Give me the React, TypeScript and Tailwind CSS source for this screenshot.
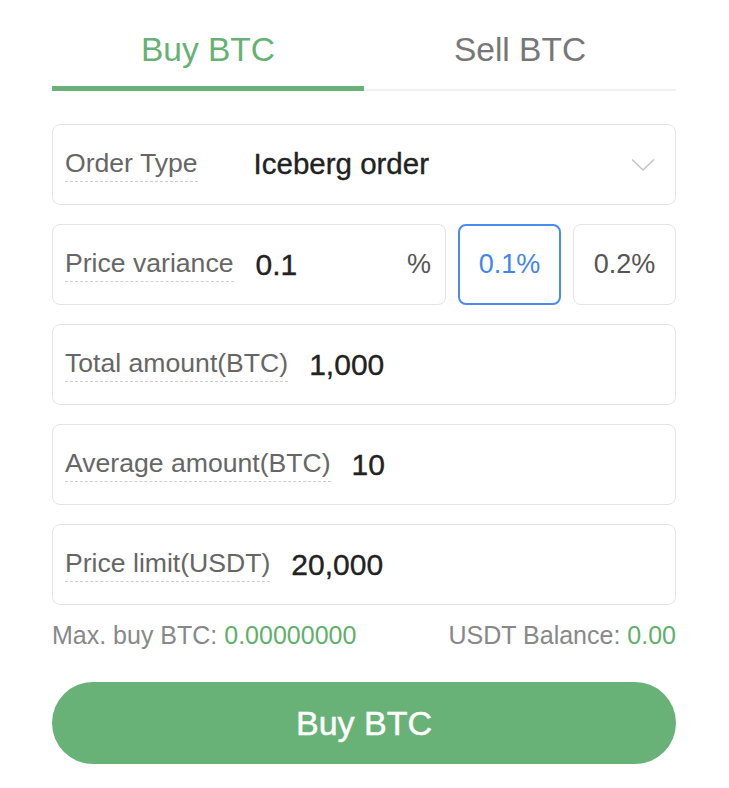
import React, { useState } from 'react';

const font = { fontFamily: '"Liberation Sans", Arial, sans-serif' };

const Label: React.FC<{ children: React.ReactNode }> = ({ children }) => (
    <span className="inline-block text-[26.6px] leading-[30px] text-[#666] border-b border-dashed border-[#cfcfcf] pb-[3px] whitespace-nowrap">
        {children}
    </span>
);

const Field: React.FC<{ label: string; value: string }> = ({ label, value }) => (
    <div className="h-[81px] flex items-center px-3 border border-[#e4e4e4] rounded-[8px]">
        <Label>{label}</Label>
        <span className="ml-[21px] text-[30px] text-[#222] [-webkit-text-stroke:0.35px_#222]">{value}</span>
    </div>
);

const App: React.FC = () => {
    const [tab, setTab] = useState<'buy' | 'sell'>('buy');
    const [variance, setVariance] = useState('0.1');

    return (
        <div className="min-h-screen w-full bg-white" style={font}>
            <div className="ml-[52px] w-[624px] flex flex-col">
                {/* Tabs */}
                <div className="grid grid-cols-2">
                    {(['buy', 'sell'] as const).map(t => (
                        <button key={t} onClick={() => setTab(t)} className="flex flex-col">
                            <span className={`pt-[30px] pb-[16px] text-[33.5px] leading-[40px] ${tab === t ? 'text-[#66b274]' : 'text-[#777]'}`}>
                                {t === 'buy' ? 'Buy BTC' : 'Sell BTC'}
                            </span>
                            {tab === t ? (
                                <div className="h-[5px] bg-[#69b277]"></div>
                            ) : (
                                <div className="h-[5px] flex flex-col justify-end">
                                    <div className="h-[2px] bg-[#f1f1f1]"></div>
                                </div>
                            )}
                        </button>
                    ))}
                </div>

                <div className="mt-[33px] flex flex-col gap-[19px]">
                    {/* Order type */}
                    <div className="h-[81px] flex items-center px-3 border border-[#e4e4e4] rounded-[8px]">
                        <Label>Order Type</Label>
                        <span className="ml-[56px] text-[29.5px] text-[#222] [-webkit-text-stroke:0.35px_#222] flex-1">Iceberg order</span>
                        <svg width="24" height="14" viewBox="0 0 24 14" className="mr-[8px]">
                            <path d="M1 1.5 L12 12 L23 1.5" fill="none" stroke="#c4c4c4" strokeWidth="1.6" />
                        </svg>
                    </div>

                    {/* Price variance */}
                    <div className="flex gap-3 h-[81px]">
                        <div className="flex-1 flex items-center pl-3 pr-[14px] border border-[#e4e4e4] rounded-[8px]">
                            <Label>Price variance</Label>
                            <span className="ml-[22px] text-[30px] text-[#222] [-webkit-text-stroke:0.35px_#222] flex-1">{variance}</span>
                            <span className="text-[27px] text-[#555]">%</span>
                        </div>
                        {['0.1', '0.2'].map(v => (
                            <button
                                key={v}
                                onClick={() => setVariance(v)}
                                className={`w-[103px] flex items-center justify-center rounded-[8px] border text-[27px] ${variance === v ? 'border-[#4a8bf0] border-2 text-[#3f86f2]' : 'border-[#e4e4e4] text-[#555]'}`}
                            >
                                {v}%
                            </button>
                        ))}
                    </div>

                    <Field label="Total amount(BTC)" value="1,000" />
                    <Field label="Average amount(BTC)" value="10" />
                    <Field label="Price limit(USDT)" value="20,000" />
                </div>

                {/* Balances */}
                <div className="mt-[15px] flex justify-between text-[25px] leading-[30px] text-[#888]">
                    <span>Max. buy BTC: <span className="text-[#5fb06c]">0.00000000</span></span>
                    <span>USDT Balance: <span className="text-[#5fb06c]">0.00</span></span>
                </div>

                <button className="mt-[32px] h-[82px] rounded-full bg-[#69b277] text-white text-[34px] [-webkit-text-stroke:0.5px_#fff]">
                    Buy BTC
                </button>
            </div>
        </div>
    );
};

export default App;
